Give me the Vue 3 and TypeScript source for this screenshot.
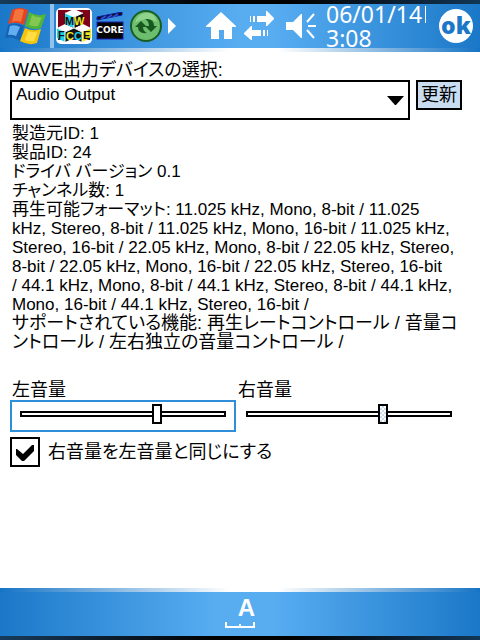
<script setup lang="ts">
import { ref } from 'vue'

const device = ref('Audio Output')
const left = ref(172)
const right = ref(172)
const linked = ref(true)

const info: string[] = [
  '製造元ID: 1',
  '製品ID: 24',
  'ドライバ バージョン 0.1',
  'チャンネル数: 1',
  '再生可能フォーマット: 11.025 kHz, Mono, 8-bit / 11.025',
  'kHz, Stereo, 8-bit / 11.025 kHz, Mono, 16-bit / 11.025 kHz,',
  'Stereo, 16-bit / 22.05 kHz, Mono, 8-bit / 22.05 kHz, Stereo,',
  '8-bit / 22.05 kHz, Mono, 16-bit / 22.05 kHz, Stereo, 16-bit',
  '/ 44.1 kHz, Mono, 8-bit / 44.1 kHz, Stereo, 8-bit / 44.1 kHz,',
  'Mono, 16-bit / 44.1 kHz, Stereo, 16-bit /',
]

const features: string[] = [
  'サポートされている機能: 再生レートコントロール / 音量コ',
  'ントロール / 左右独立の音量コントロール /',
]

function syncRight() {
  if (linked.value) right.value = left.value
}
</script>

<template>
  <div class="screen">
    <header class="bar top">
      <div class="launch">
        <svg class="logo" width="44" height="40" viewBox="4 6 44 40">
          <path d="M12 10Q19 6 28 10L24 25Q16 21 8 24Z" fill="#e8431f" />
          <path d="M15 10Q19 8 24 10L21 22Q16 20 12 22Z" fill="#f4743e" />
          <path d="M29 12Q37 17 46 14L41 28Q33 31 25 26Z" fill="#4fb53a" />
          <path d="M32 15Q37 18 42 17L38 26Q34 27 29 25Z" fill="#82c850" />
          <path d="M8 25Q16 22 24 26L20 41Q12 36 5 38Z" fill="#1463b4" />
          <path d="M10 26Q15 24 20 27L16 36Q11 34 8 35Z" fill="#63aef0" />
          <path d="M25 28Q33 32 41 29L37 43Q29 46 20 41Z" fill="#f3c50e" />
          <path d="M28 31Q32 33 37 32L34 41Q29 42 25 40Z" fill="#ffde45" />
        </svg>
        <span class="divider"></span>
        <svg class="app" width="36" height="36" viewBox="0 0 36 36">
          <rect width="36" height="36" rx="5" fill="#fff" />
          <path d="M2 2H34V20H2Z" fill="#7e0018" />
          <path d="M2 20H34V32H2Z" fill="#10106c" />
          <path d="M18 1L27 5L18 9L9 5ZM9 16L18 20L9 24L1 20ZM27 16L35 20L26 24L18 20Z" fill="#fff" />
          <path d="M9 5L18 9V20L9 16Z" fill="#18d4e8" />
          <path d="M18 9L27 5V16L18 20Z" fill="#111" />
          <path d="M1 20L9 24V34L1 30Z" fill="#18d4e8" />
          <path d="M9 24L18 20V30L9 34ZM18 20L26 24V34L18 30Z" fill="#111" />
          <path d="M26 24L35 20V30L26 34Z" fill="#f3e720" />
          <path d="M9 5L18 9L27 5M18 9V20L9 24L1 20M18 20L26 24L35 20M9 24V34M26 24V34" fill="none" stroke="#fff" />
          <text x="9" y="17" class="cube">M</text>
          <text x="18" y="17" class="cube yellow">W</text>
          <text x="2" y="31" class="cube">F</text>
          <text x="10" y="32" class="cube yellow">C</text>
          <text x="18" y="32" class="cube cyan">C</text>
          <text x="27" y="31" class="cube">E</text>
        </svg>
        <svg class="core" width="28" height="28" viewBox="0 0 28 28">
          <path d="M1 5L26 0V3L1 8Z" fill="#111" stroke="#1118a8" />
          <path d="M5 7L10 4M11 6L16 3M17 5L22 2" stroke="#2a50d8" stroke-width="2" />
          <rect x="1" y="10" width="26" height="17" fill="#050505" stroke="#1620b4" />
          <text x="14" y="21" class="core-text">CORE</text>
        </svg>
        <svg class="sync" width="34" height="34" viewBox="0 0 34 34">
          <circle cx="17" cy="17" r="15" fill="#6cbd6d" stroke="#185e22" stroke-width="2" />
          <path d="M6 14Q8 5 17 4T28 13Q18 7 6 14" fill="#8fd38c" />
          <path d="M6 18L12 12L18 18H14Q14 22 18 24Q9 25 9 18Z" fill="#17581f" />
          <path d="M28 17L22 23L16 17H20Q20 12 16 10Q25 9 25 17Z" fill="#17581f" />
        </svg>
        <svg width="8" height="16" viewBox="0 0 8 16"><path d="M0 0L8 8L0 16Z" fill="#fff" /></svg>
      </div>
      <div class="status">
        <svg class="home" width="30" height="28" viewBox="0 0 30 28">
          <path d="M15 0L30 14V15H26V27H18V18H13V27H5V15H0V14Z" fill="#fff" />
        </svg>
        <svg class="net" width="30" height="30" viewBox="0 0 30 30">
          <path d="M6 5H7V11H6ZM9 5H11V11H9ZM13 5H22V0H23L30 7V8L23 15H22V11H13Z" fill="#fff" />
          <path d="M24 19H23V25H24ZM21 19H19V25H21ZM17 19H8V15H7L0 22V23L7 29H8V25H17Z" fill="#fff" />
        </svg>
        <svg width="30" height="26" viewBox="0 0 30 26">
          <path d="M0 9H7L15 1H16V25H15L7 17H0Z" fill="#fff" />
          <path d="M21 9L28 1M22 13H30M21 17L28 25" stroke="#fff" stroke-width="2" />
        </svg>
        <time class="clock">
          <span class="date">06/01/14</span>
          <span>3:08</span>
        </time>
        <button class="ok" type="button">ok</button>
      </div>
    </header>

    <main class="content">
      <label class="caption" for="device">WAVE出力デバイスの選択:</label>
      <div class="row">
        <div class="picker">
          <select id="device" v-model="device">
            <option>Audio Output</option>
          </select>
          <svg class="arrow" width="17" height="9" viewBox="0 0 17 9"><path d="M0 0H17L9 9H8Z" /></svg>
        </div>
        <button class="refresh" type="button">更新</button>
      </div>

      <div class="info">
        <div v-for="(line, i) in info" :key="i">{{ line }}</div>
      </div>
      <div class="info features">
        <div v-for="(line, i) in features" :key="i">{{ line }}</div>
      </div>

      <div class="volumes">
        <div>
          <label class="caption" for="left">左音量</label>
          <div class="slider focused">
            <input id="left" v-model.number="left" type="range" min="0" max="255" @input="syncRight" />
          </div>
        </div>
        <div>
          <label class="caption" for="right">右音量</label>
          <div class="slider shaded">
            <input id="right" v-model.number="right" type="range" min="0" max="255" />
          </div>
        </div>
      </div>

      <label class="check">
        <input v-model="linked" type="checkbox" @change="syncRight" />
        <svg v-if="linked" class="tick" width="18" height="16" viewBox="0 0 18 16">
          <path d="M0 4H1L7 9L16 0H18V6L8 16H6L0 10Z" />
        </svg>
        <span>右音量を左音量と同じにする</span>
      </label>
    </main>

    <footer class="bar bottom">
      <button class="input-mode" type="button">
        <span>A</span>
        <svg width="30" height="6" viewBox="0 0 30 6">
          <path d="M1 0V5H29V0M15 2V5" fill="none" stroke="#fff" stroke-width="2" />
        </svg>
      </button>
    </footer>
  </div>
</template>

<style>
body {
  margin: 0;
}
</style>

<style scoped>
.screen {
  display: flex;
  flex-direction: column;
  min-height: 100vh;
  background: #fff;
  color: #000;
  font: 18px/19px "Liberation Sans", "Noto Sans CJK JP", sans-serif;
}
.screen * {
  box-sizing: border-box;
}
svg {
  display: block;
  flex: none;
}
button {
  font: inherit;
  cursor: pointer;
}
.bar {
  color: #fff;
}
.top {
  display: flex;
  justify-content: space-between;
  height: 52px;
  padding: 4px 7px 4px 4px;
  background:
    linear-gradient(90deg, #173b5c, #000 45%, #000 60%, #123656) top / 100% 4px no-repeat,
    linear-gradient(90deg, #1674c6, #fff 48%, #fff 58%, #1674c6) bottom / 100% 4px no-repeat,
    linear-gradient(90deg, #1b78c8, #58adf1 50%, #58adf1 57%, #1b78c8);
}
.launch,
.status {
  display: flex;
  align-items: center;
}
.divider {
  width: 4px;
  height: 44px;
  margin: 0 2px;
  background: #8fc3ee;
}
.core {
  margin: 0 5px 0 4px;
}
.sync {
  margin-right: 5px;
}
.cube {
  font: bold 11px "Liberation Sans", sans-serif;
  fill: #111;
}
.yellow {
  fill: #f3e720;
}
.cyan {
  fill: #18d4e8;
}
.core-text {
  font: bold 9px "DejaVu Sans", sans-serif;
  text-anchor: middle;
  fill: #fff;
}
.home {
  margin-right: 8px;
}
.net {
  margin-right: 12px;
}
.clock {
  display: flex;
  flex-direction: column;
  width: 100px;
  margin: 0 13px 0 10px;
  font: 23px/24px "Noto Sans", sans-serif;
}
.date {
  background: linear-gradient(#fff, #fff) right / 1px 17px no-repeat;
}
.ok {
  width: 34px;
  height: 34px;
  padding: 0 0 3px;
  border: 0;
  border-radius: 50%;
  background: #fff;
  color: #1b78c8;
  font: 800 23px/28px "Open Sans", sans-serif;
}
.content {
  flex: 1;
  padding: 9px 18px 20px 10px;
}
.caption {
  display: block;
  padding-left: 2px;
  font-feature-settings: "palt";
}
.row {
  display: flex;
  align-items: flex-start;
  gap: 6px;
}
.picker {
  position: relative;
  flex: 1;
}
select {
  display: block;
  width: 100%;
  height: 40px;
  padding: 0 28px 12px 4px;
  border: 2px solid #000;
  border-radius: 0;
  outline: 0;
  appearance: none;
  background: #fff;
  color: #000;
  font: inherit;
  font-size: 17px;
}
.arrow {
  position: absolute;
  top: 16px;
  right: 6px;
  pointer-events: none;
}
.refresh {
  width: 46px;
  height: 30px;
  padding: 0;
  border: 2px solid #000;
  background: #c9dcf0;
  color: #000;
}
.info {
  padding: 4px 0 0 2px;
  font-size: 17px;
  white-space: nowrap;
  font-feature-settings: "palt";
}
.features {
  padding-top: 0;
  font-size: 18px;
}
.volumes {
  display: grid;
  grid-template-columns: 1fr 1fr;
  padding-top: 29px;
}
.slider {
  height: 32px;
  padding: 2px 8px;
  border: 2px solid transparent;
}
.focused {
  border-color: #2f8fd8;
}
input[type="range"] {
  display: block;
  width: 100%;
  height: 20px;
  margin: 0;
  outline: 0;
  appearance: none;
  background: transparent;
}
input[type="range"]::-webkit-slider-runnable-track {
  height: 6px;
  border: 2px solid #000;
  background: #fff;
}
input[type="range"]::-webkit-slider-thumb {
  width: 10px;
  height: 20px;
  margin-top: -9px;
  border: 2px solid #000;
  border-radius: 0;
  box-sizing: border-box;
  appearance: none;
  background: #fff;
}
.shaded input[type="range"]::-webkit-slider-thumb {
  background: repeating-conic-gradient(#c9dcf0 0 25%, #fff 0 50%) 0 0 / 4px 4px;
}
.check {
  position: relative;
  display: flex;
  align-items: center;
  gap: 8px;
  margin-top: 5px;
  font-feature-settings: "palt";
}
.check input {
  width: 30px;
  height: 30px;
  margin: 0;
  border: 2px solid #000;
  appearance: none;
  background: #fff;
}
.tick {
  position: absolute;
  top: 8px;
  left: 6px;
  pointer-events: none;
}
.bottom {
  display: flex;
  justify-content: center;
  height: 52px;
  padding: 4px 0;
  background:
    linear-gradient(90deg, #1674c6, #fff 48%, #fff 58%, #1674c6) top / 100% 4px no-repeat,
    linear-gradient(90deg, #173b5c, #000 45%, #000 60%, #123656) bottom / 100% 4px no-repeat,
    linear-gradient(90deg, #1b78c8, #58adf1 45%, #58adf1 57%, #1b78c8);
}
.input-mode {
  display: flex;
  flex-direction: column;
  align-items: flex-end;
  gap: 2px;
  padding: 4px 0 0;
  border: 0;
  background: transparent;
  color: #fff;
  font: bold 24px/24px "Liberation Sans", sans-serif;
}
</style>
